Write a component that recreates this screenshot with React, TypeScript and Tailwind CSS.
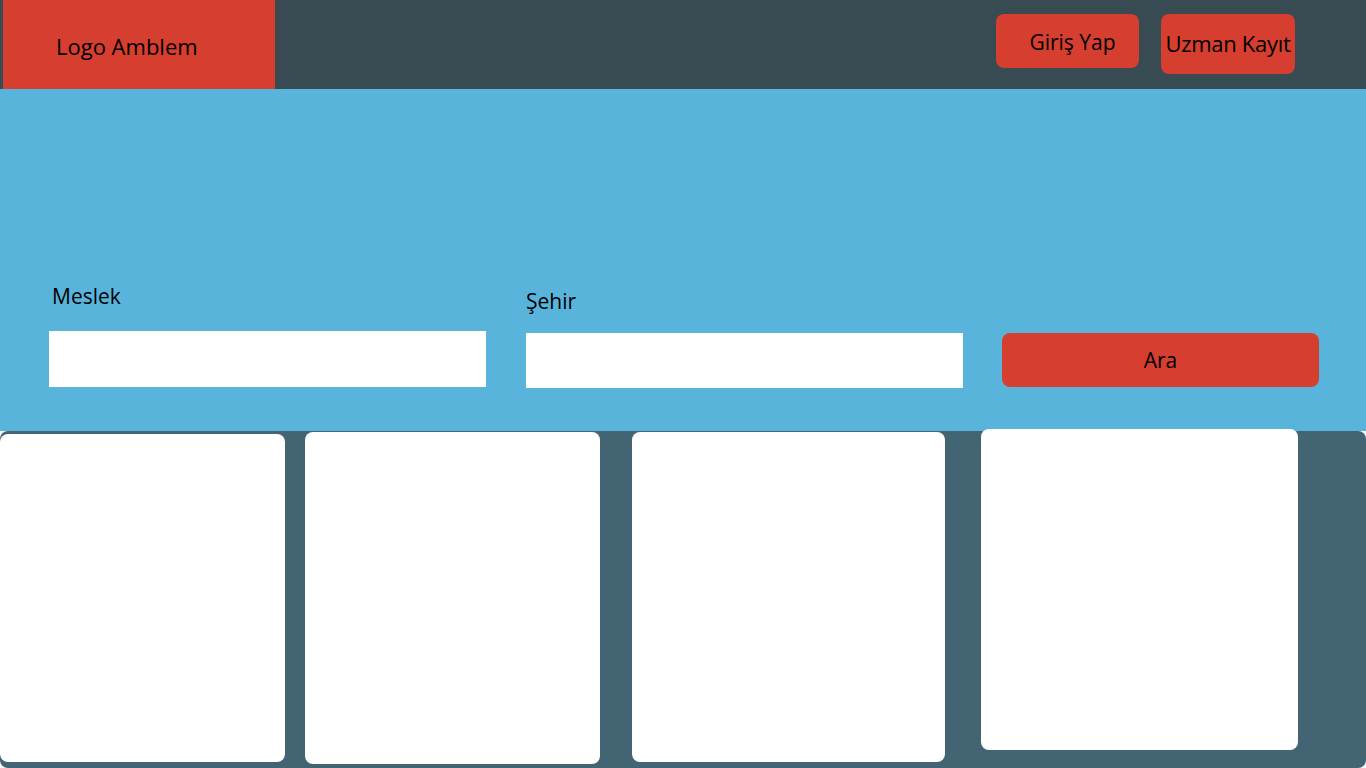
import React from "react";

export default function App() {
  const font = { fontFamily: '"Open Sans", "Noto Sans", sans-serif' };
  return (
    <div className="w-[1366px] h-[768px] bg-white overflow-hidden text-black" style={font}>
      <header className="h-[89px] bg-[#384a52] flex items-start">
        <div className="ml-[3px] w-[272px] h-[89px] bg-[#d63e2f] flex items-center pl-[53px] pt-[4px] text-[22px]">
          Logo Amblem
        </div>
        <div className="ml-auto mr-[71px] mt-[14px] flex gap-[22px]">
          <button className="w-[143px] h-[54px] rounded-[8px] bg-[#d63e2f] text-[21px] pl-[10px] pt-[4px]">
            Giriş Yap
          </button>
          <button className="w-[134px] h-[60px] rounded-[8px] bg-[#d63e2f] text-[22px] tracking-[-0.3px] pb-[2px] whitespace-nowrap">
            Uzman Kayıt
          </button>
        </div>
      </header>
      <section className="h-[342px] bg-[#59b4dc] flex items-start pl-[49px]">
        <div className="flex flex-col mt-[193px] shrink-0">
          <label className="ml-[3px] text-[21px] leading-[28px]">Meslek</label>
          <div className="mt-[21px] w-[437px] h-[56px] bg-white" />
        </div>
        <div className="flex flex-col mt-[198px] ml-[40px] shrink-0">
          <label className="text-[21px] leading-[28px]">Şehir</label>
          <div className="mt-[18px] w-[437px] h-[55px] bg-white" />
        </div>
        <button className="shrink-0 mt-[244px] ml-[39px] w-[317px] h-[54px] rounded-[8px] bg-[#d63e2f] text-[21px] pt-[2px]">
          Ara
        </button>
      </section>
      <section className="h-[337px] bg-[#436473] rounded-[8px] flex items-start">
        <div className="mt-[3px] w-[285px] h-[328px] bg-white rounded-[8px]" />
        <div className="mt-[1px] ml-[20px] w-[295px] h-[332px] bg-white rounded-[8px]" />
        <div className="mt-[1px] ml-[32px] w-[313px] h-[330px] bg-white rounded-[8px]" />
        <div className="-mt-[2px] ml-[36px] w-[317px] h-[321px] bg-white rounded-[8px]" />
      </section>
    </div>
  );
}
